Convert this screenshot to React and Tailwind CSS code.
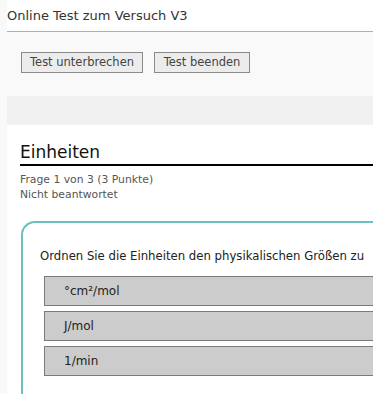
import React from "react";

function Item({ label }) {
  return (
    <div className="h-[30px] border border-[#7a7a7a] border-r-0 bg-[#cccccc] pl-[19px] flex items-center text-[12px] text-[#222]">
      {label}
    </div>
  );
}

export default function App() {
  const items = ["°cm²/mol", "J/mol", "1/min"];

  return (
    <div
      className="min-h-[394px] bg-[#f9f9f9] pl-[7px] overflow-hidden"
      style={{ fontFamily: '"DejaVu Sans", Verdana, sans-serif' }}
    >
      <div className="bg-white h-[32px] border-b border-[#b0b0b0] flex items-center text-[13px] text-[#333]">
        <span className="pt-[1px]">Online Test zum Versuch V3</span>
      </div>

      <div className="h-[64px] pl-[14px] pt-[20px] flex gap-[11px]">
        <button className="h-[21px] w-[122px] border border-[#8a8a8a] bg-[#ececec] text-[11.5px] text-[#444]">
          Test unterbrechen
        </button>
        <button className="h-[21px] w-[96px] border border-[#8a8a8a] bg-[#ececec] text-[11.5px] text-[#444]">
          Test beenden
        </button>
      </div>

      <div className="h-[29px] bg-[#f1f1f1]" />

      <div className="bg-white pl-[13px] pt-[17px] pb-[40px]">
        <h1 className="text-[17px] leading-[21px] text-[#111] border-b-2 border-black pb-[1px]">
          Einheiten
        </h1>
        <div className="mt-[6px] text-[10.8px] leading-[15px] text-[#555]">
          <div>Frage 1 von 3 (3 Punkte)</div>
          <div>Nicht beantwortet</div>
        </div>

        <div className="mt-[19px] ml-[1px] border-2 border-r-0 border-[#6cc0c0] rounded-tl-[14px] pl-[17px] pt-[25px] pb-[20px]">
          <div className="text-[11.7px] text-[#222] mb-[10px]">
            Ordnen Sie die Einheiten den physikalischen Größen zu
          </div>
          <div className="ml-[4px] flex flex-col gap-[5px]">
            {items.map((label) => (
              <Item key={label} label={label} />
            ))}
          </div>
        </div>
      </div>
    </div>
  );
}
